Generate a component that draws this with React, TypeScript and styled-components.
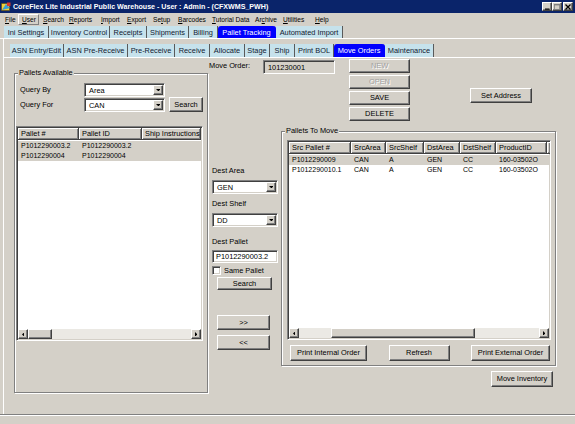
import React from "react";
import styled, { createGlobalStyle, css } from "styled-components";

const FACE = "#d4d0c8";

const GlobalStyle = createGlobalStyle`
  *, *::before, *::after { box-sizing: border-box; }
  html, body { margin: 0; padding: 0; background: ${FACE}; }
  body { font-family: "Liberation Sans", Arial, sans-serif; }
`;

const raised = css`
  background: ${FACE};
  border: 1px solid;
  border-color: #ffffff #404040 #404040 #ffffff;
  box-shadow: inset -1px -1px #808080;
`;

const sunken = css`
  border: 1px solid;
  border-color: #808080 #ffffff #ffffff #808080;
  box-shadow: inset 1px 1px #404040, inset -1px -1px ${FACE};
`;

const Window = styled.div`
  width: 575px;
  height: 424px;
  display: flex;
  flex-direction: column;
  overflow: hidden;
  background: ${FACE};
  color: #000;
  font-size: 7.4px;
`;

const TitleBar = styled.div`
  flex: none;
  height: 13px;
  display: flex;
  align-items: center;
  padding: 0 2px 0 1px;
  background: #0a246a;
  color: #fff;
  font-weight: bold;
  font-size: 7.1px;
`;

const TitleText = styled.span`
  flex: 1;
  margin-left: 2px;
  white-space: nowrap;
`;

const CaptionButton = styled.div<{ $gap?: number }>`
  ${raised};
  width: 10px;
  height: 9px;
  margin-left: ${(p) => p.$gap ?? 0}px;
  display: flex;
  align-items: center;
  justify-content: center;
`;

const MenuBar = styled.div`
  flex: none;
  height: 12px;
  display: flex;
  align-items: center;
  padding-left: 1px;
  font-size: 6.6px;
`;

const MenuItem = styled.span<{ $w: number; $hot?: boolean }>`
  flex: none;
  width: ${(p) => p.$w}px;
  padding-left: 3px;
  line-height: 9px;
  border: 1px solid transparent;
  white-space: nowrap;
  ${(p) =>
    p.$hot &&
    css`
      border-color: #ffffff #808080 #808080 #ffffff;
    `}
`;

const TabStrip = styled.div<{ $h: number; $left: number }>`
  flex: none;
  height: ${(p) => p.$h}px;
  display: flex;
  align-items: flex-end;
  padding-left: ${(p) => p.$left}px;
  border-bottom: 1px solid #ffffff;
`;

const Tab = styled.div<{ $w: number; $h: number; $active?: boolean }>`
  flex: none;
  width: ${(p) => p.$w}px;
  height: ${(p) => p.$h}px;
  display: flex;
  align-items: center;
  justify-content: center;
  white-space: nowrap;
  background: #c6e2ec;
  color: #102030;
  border-right: 1px solid #5a5a5a;
  ${(p) =>
    p.$active &&
    css`
      background: #0000ff;
      color: #fff;
      border-radius: 3px 3px 0 0;
      border-right-color: #0000ff;
    `}
`;

const OuterPage = styled.div`
  flex: 1;
  min-height: 0;
  display: flex;
  flex-direction: column;
  margin-left: 3px;
  border-left: 1px solid #ffffff;
`;

const PageBody = styled.div`
  flex: 1;
  display: flex;
  align-items: flex-start;
  padding-left: 10px;
`;

const StatusBar = styled.div`
  flex: none;
  height: 10px;
  border-top: 1px solid #808080;
  box-shadow: inset 0 1px #ffffff;
`;

const Group = styled.div<{ $w: number; $h: number; $top: number }>`
  position: relative;
  flex: none;
  width: ${(p) => p.$w}px;
  height: ${(p) => p.$h}px;
  margin-top: ${(p) => p.$top}px;
  border: 1px solid #808080;
  box-shadow: inset 1px 1px #ffffff, 1px 1px #ffffff;
  display: flex;
  flex-direction: column;
`;

const GroupTitle = styled.span`
  position: absolute;
  top: -6px;
  left: 3px;
  padding: 0 1px;
  line-height: 10px;
  background: ${FACE};
  white-space: nowrap;
`;

const QueryGrid = styled.div`
  margin: 9px 0 0 5px;
  display: grid;
  grid-template-columns: 64px 81px 38px;
  grid-template-rows: 14px 14px;
  row-gap: 1px;
  align-items: center;
`;

const Label = styled.span`
  line-height: 10px;
  white-space: nowrap;
`;

const ComboBox = styled.div<{ $w: number; $h: number }>`
  ${sunken};
  width: ${(p) => p.$w}px;
  height: ${(p) => p.$h}px;
  background: #fff;
  display: flex;
  align-items: stretch;
  padding: 1px;
`;

const ComboText = styled.span`
  flex: 1;
  padding-left: 3px;
  display: flex;
  align-items: center;
  white-space: nowrap;
`;

const DropButton = styled.span`
  ${raised};
  width: 10px;
  display: flex;
  align-items: center;
  justify-content: center;
`;

const Button = styled.button<{ $w: number; $h: number }>`
  ${raised};
  flex: none;
  width: ${(p) => p.$w}px;
  height: ${(p) => p.$h}px;
  padding: 0;
  font: inherit;
  color: #000;
  line-height: 1;
  white-space: nowrap;
  &:disabled {
    color: #a0a0a0;
    text-shadow: 1px 1px #ffffff;
  }
`;

const GridButton = styled(Button)`
  margin: -2px 0 0 4px;
  align-self: end;
  grid-column: 3;
  grid-row: 2;
`;

const ListBox = styled.div<{ $w: number; $h: number; $top: number; $left: number }>`
  ${sunken};
  flex: none;
  width: ${(p) => p.$w}px;
  height: ${(p) => p.$h}px;
  margin: ${(p) => p.$top}px 0 0 ${(p) => p.$left}px;
  padding: 1px;
  background: #fff;
  display: flex;
  flex-direction: column;
  overflow: hidden;
`;

const ListHeader = styled.div`
  flex: none;
  height: 12px;
  display: flex;
`;

const HeaderCell = styled.div<{ $w?: number }>`
  ${(p) => (p.$w ? `width: ${p.$w}px; flex: none;` : "flex: 1;")}
  background: ${FACE};
  border-right: 1px solid #404040;
  border-bottom: 1px solid #404040;
  box-shadow: inset 1px 1px #ffffff, inset -1px -1px #808080;
  padding-left: 3px;
  line-height: 11px;
  white-space: nowrap;
  overflow: hidden;
`;

const ListRows = styled.div`
  flex: 1;
  padding-top: 1px;
  font-size: 7px;
`;

const Row = styled.div<{ $sel?: boolean }>`
  height: 10px;
  display: flex;
  background: ${(p) => (p.$sel ? FACE : "#fff")};
`;

const Cell = styled.div<{ $w?: number }>`
  ${(p) => (p.$w ? `width: ${p.$w}px; flex: none;` : "flex: 1;")}
  padding-left: 3px;
  line-height: 10px;
  white-space: nowrap;
  overflow: hidden;
`;

const ScrollBar = styled.div`
  flex: none;
  height: 10px;
  display: flex;
  background: #ebe9e4;
`;

const ScrollArrow = styled.div`
  ${raised};
  flex: none;
  width: 10px;
  height: 10px;
  display: flex;
  align-items: center;
  justify-content: center;
`;

const ScrollThumb = styled.div<{ $w: number; $left: number }>`
  ${raised};
  flex: none;
  width: ${(p) => p.$w}px;
  margin-left: ${(p) => p.$left}px;
`;

const Spacer = styled.div`
  flex: 1;
`;

const RightArea = styled.div`
  flex: none;
  width: 347px;
  margin-left: 1px;
  display: flex;
  flex-direction: column;
`;

const TopRow = styled.div`
  display: flex;
  align-items: flex-start;
  height: 62px;
  margin-top: 1px;
`;

const MoveOrderLabel = styled(Label)`
  width: 54px;
  padding-top: 2px;
`;

const ReadField = styled.div`
  ${sunken};
  width: 72px;
  height: 14px;
  margin-top: 1px;
  padding-left: 4px;
  display: flex;
  align-items: center;
`;

const ButtonStack = styled.div`
  display: flex;
  flex-direction: column;
  gap: 2px;
  margin-left: 14px;
`;

const SetAddressButton = styled(Button)`
  margin: 29px 0 0 60px;
`;

const LowerRow = styled.div`
  display: flex;
`;

const MiddleCol = styled.div`
  flex: none;
  width: 71px;
  padding: 45px 0 0 3px;
  display: flex;
  flex-direction: column;
  align-items: flex-start;
`;

const FieldLabel = styled(Label)<{ $top?: number }>`
  margin-top: ${(p) => p.$top ?? 0}px;
  margin-bottom: 4px;
`;

const TextBox = styled.div`
  ${sunken};
  width: 66px;
  height: 13px;
  margin-top: -1px;
  background: #fff;
  padding-left: 3px;
  display: flex;
  align-items: center;
  white-space: nowrap;
`;

const CheckRow = styled.label`
  display: flex;
  align-items: center;
  gap: 3px;
  margin-top: 2px;
  height: 10px;
`;

const CheckBox = styled.span`
  ${sunken};
  width: 9px;
  height: 9px;
  background: #fff;
`;

const MiddleButton = styled(Button)<{ $top: number }>`
  margin: ${(p) => p.$top}px 0 0 5px;
`;

const RightCol = styled.div`
  flex: none;
  width: 276px;
  display: flex;
  flex-direction: column;
  align-items: flex-end;
`;

const GroupButtons = styled.div`
  display: flex;
  justify-content: space-between;
  margin-top: 5px;
  padding: 0 5px 0 8px;
`;

const MoveInventoryButton = styled(Button)`
  margin: 5px 3px 0 0;
`;

const Tri: React.FC<{ dir: "down" | "left" | "right" }> = ({ dir }) => {
  const pts =
    dir === "down" ? "0,0 6,0 3,3" : dir === "left" ? "3,0 3,6 0,3" : "0,0 0,6 3,3";
  const w = dir === "down" ? 6 : 3;
  const h = dir === "down" ? 3 : 6;
  return (
    <svg width={w * 0.8} height={h * 0.8} viewBox={`0 0 ${w} ${h}`}>
      <polygon points={pts} fill="#000" />
    </svg>
  );
};

const Combo: React.FC<{ value: string; w: number; h: number }> = ({ value, w, h }) => (
  <ComboBox $w={w} $h={h}>
    <ComboText>{value}</ComboText>
    <DropButton>
      <Tri dir="down" />
    </DropButton>
  </ComboBox>
);

interface Column {
  title: string;
  w?: number;
}

interface ListProps {
  columns: Column[];
  rows: { cells: string[]; sel?: boolean }[];
  w: number;
  h: number;
  top: number;
  left: number;
  thumb: { w: number; left: number };
}

const ListView: React.FC<ListProps> = ({ columns, rows, w, h, top, left, thumb }) => (
  <ListBox $w={w} $h={h} $top={top} $left={left}>
    <ListHeader>
      {columns.map((c, i) => (
        <HeaderCell key={i} $w={c.w}>
          {c.title}
        </HeaderCell>
      ))}
    </ListHeader>
    <ListRows>
      {rows.map((r, i) => (
        <Row key={i} $sel={r.sel}>
          {columns.map((c, j) => (
            <Cell key={j} $w={c.w}>
              {r.cells[j] ?? ""}
            </Cell>
          ))}
        </Row>
      ))}
    </ListRows>
    <ScrollBar>
      <ScrollArrow>
        <Tri dir="left" />
      </ScrollArrow>
      <ScrollThumb $w={thumb.w} $left={thumb.left} />
      <Spacer />
      <ScrollArrow>
        <Tri dir="right" />
      </ScrollArrow>
    </ScrollBar>
  </ListBox>
);

// [before mnemonic, mnemonic, after, box width]
const menus: [string, string, string, number][] = [
  ["", "F", "ile", 17],
  ["", "U", "ser", 21],
  ["", "S", "earch", 26],
  ["", "R", "eports", 32],
  ["", "I", "mport", 26],
  ["", "E", "xport", 26],
  ["Se", "t", "up", 25],
  ["", "B", "arcodes", 34],
  ["", "T", "utorial Data", 43],
  ["Ar", "c", "hive", 28],
  ["", "U", "tilities", 32],
  ["", "H", "elp", 20],
];

const topTabs: [string, number][] = [
  ["Ini Settings", 45],
  ["Inventory Control", 61],
  ["Receipts", 37],
  ["Shipments", 42],
  ["Billing", 29],
  ["Pallet Tracking", 58],
  ["Automated Import", 67],
];

const subTabs: [string, number][] = [
  ["ASN Entry/Edit", 54],
  ["ASN Pre-Receive", 64],
  ["Pre-Receive", 47],
  ["Receive", 35],
  ["Allocate", 35],
  ["Stage", 25],
  ["Ship", 25],
  ["Print BOL", 39],
  ["Move Orders", 51],
  ["Maintenance", 49],
];

const AppIcon = () => (
  <svg width="10" height="10" viewBox="0 0 10 10">
    <rect x="0.5" y="1.5" width="8" height="7" fill="#f4d23a" stroke="#5a4a10" strokeWidth="0.6" />
    <path d="M1 8 L5 2 L9 6 Z" fill="#3aa0d8" />
    <rect x="6" y="0.5" width="3.5" height="3.5" fill="#d83a2a" />
  </svg>
);

export default function App() {
  return (
    <Window>
      <GlobalStyle />
      <TitleBar>
        <AppIcon />
        <TitleText>CoreFlex Lite Industrial Public Warehouse - User : Admin - (CFXWMS_PWH)</TitleText>
        <CaptionButton>
          <svg width="5" height="6" viewBox="0 0 5 6">
            <rect x="0" y="4.5" width="4.5" height="1.2" fill="#000" />
          </svg>
        </CaptionButton>
        <CaptionButton>
          <svg width="6" height="6" viewBox="0 0 6 6">
            <rect x="0.4" y="0.4" width="5.2" height="5" fill="none" stroke="#808080" strokeWidth="0.8" />
            <rect x="0" y="0" width="6" height="1.4" fill="#808080" />
          </svg>
        </CaptionButton>
        <CaptionButton $gap={1}>
          <svg width="6" height="6" viewBox="0 0 6 6">
            <path d="M0.5 0.5 L5.5 5.5 M5.5 0.5 L0.5 5.5" stroke="#000" strokeWidth="1.3" />
          </svg>
        </CaptionButton>
      </TitleBar>

      <MenuBar>
        {menus.map(([pre, key, rest, w], i) => (
          <MenuItem key={i} $w={w} $hot={i === 1}>
            {pre}
            <u>{key}</u>
            {rest}
          </MenuItem>
        ))}
      </MenuBar>

      <TabStrip $h={14} $left={4}>
        {topTabs.map(([t, w]) => (
          <Tab key={t} $w={w} $h={12} $active={t === "Pallet Tracking"}>
            {t}
          </Tab>
        ))}
      </TabStrip>

      <OuterPage>
        <TabStrip $h={19} $left={6}>
          {subTabs.map(([t, w]) => (
            <Tab key={t} $w={w} $h={13} $active={t === "Move Orders"}>
              {t}
            </Tab>
          ))}
        </TabStrip>

        <PageBody>
          <Group $w={194} $h={320} $top={15}>
            <GroupTitle>Pallets Available</GroupTitle>
            <QueryGrid>
              <Label>Query By</Label>
              <Combo value="Area" w={81} h={14} />
              <span />
              <Label>Query For</Label>
              <Combo value="CAN" w={81} h={14} />
              <GridButton $w={34} $h={15}>
                Search
              </GridButton>
            </QueryGrid>
            <ListView
              w={187}
              h={215}
              top={14}
              left={1}
              columns={[{ title: "Pallet #", w: 61 }, { title: "Pallet ID", w: 63 }, { title: "Ship Instructions" }]}
              rows={[
                { cells: ["P1012290003.2", "P1012290003.2", ""], sel: true },
                { cells: ["P1012290004", "P1012290004", ""], sel: true },
              ]}
              thumb={{ w: 24, left: 0 }}
            />
          </Group>

          <RightArea>
            <TopRow>
              <MoveOrderLabel>Move Order:</MoveOrderLabel>
              <ReadField>101230001</ReadField>
              <ButtonStack>
                <Button $w={61} $h={14} disabled>
                  NEW
                </Button>
                <Button $w={61} $h={14} disabled>
                  OPEN
                </Button>
                <Button $w={61} $h={14}>
                  SAVE
                </Button>
                <Button $w={61} $h={14}>
                  DELETE
                </Button>
              </ButtonStack>
              <SetAddressButton $w={62} $h={15}>
                Set Address
              </SetAddressButton>
            </TopRow>

            <LowerRow>
              <MiddleCol>
                <FieldLabel>Dest Area</FieldLabel>
                <Combo value="GEN" w={66} h={14} />
                <FieldLabel $top={5}>Dest Shelf</FieldLabel>
                <Combo value="DD" w={66} h={14} />
                <FieldLabel $top={10}>Dest Pallet</FieldLabel>
                <TextBox>P1012290003.2</TextBox>
                <CheckRow>
                  <CheckBox />
                  Same Pallet
                </CheckRow>
                <MiddleButton $w={55} $h={13} $top={2}>
                  Search
                </MiddleButton>
                <MiddleButton $w={53} $h={15} $top={25}>
                  &gt;&gt;
                </MiddleButton>
                <MiddleButton $w={53} $h={15} $top={5}>
                  &lt;&lt;
                </MiddleButton>
              </MiddleCol>

              <RightCol>
                <Group $w={275} $h={235} $top={10}>
                  <GroupTitle>Pallets To Move</GroupTitle>
                  <ListView
                    w={264}
                    h={200}
                    top={8}
                    left={5}
                    columns={[
                      { title: "Src Pallet #", w: 62 },
                      { title: "SrcArea", w: 35 },
                      { title: "SrcShelf", w: 38 },
                      { title: "DstArea", w: 36 },
                      { title: "DstShelf", w: 36 },
                      { title: "ProductID", w: 51 },
                      { title: "" },
                    ]}
                    rows={[
                      { cells: ["P1012290009", "CAN", "A", "GEN", "CC", "160-03502O"], sel: true },
                      { cells: ["P1012290010.1", "CAN", "A", "GEN", "CC", "160-03502O"] },
                    ]}
                    thumb={{ w: 144, left: 32 }}
                  />
                  <GroupButtons>
                    <Button $w={77} $h={16}>
                      Print Internal Order
                    </Button>
                    <Button $w={61} $h={16}>
                      Refresh
                    </Button>
                    <Button $w={79} $h={16}>
                      Print External Order
                    </Button>
                  </GroupButtons>
                </Group>
                <MoveInventoryButton $w={62} $h={16}>
                  Move Inventory
                </MoveInventoryButton>
              </RightCol>
            </LowerRow>
          </RightArea>
        </PageBody>
      </OuterPage>
      <StatusBar />
    </Window>
  );
}
